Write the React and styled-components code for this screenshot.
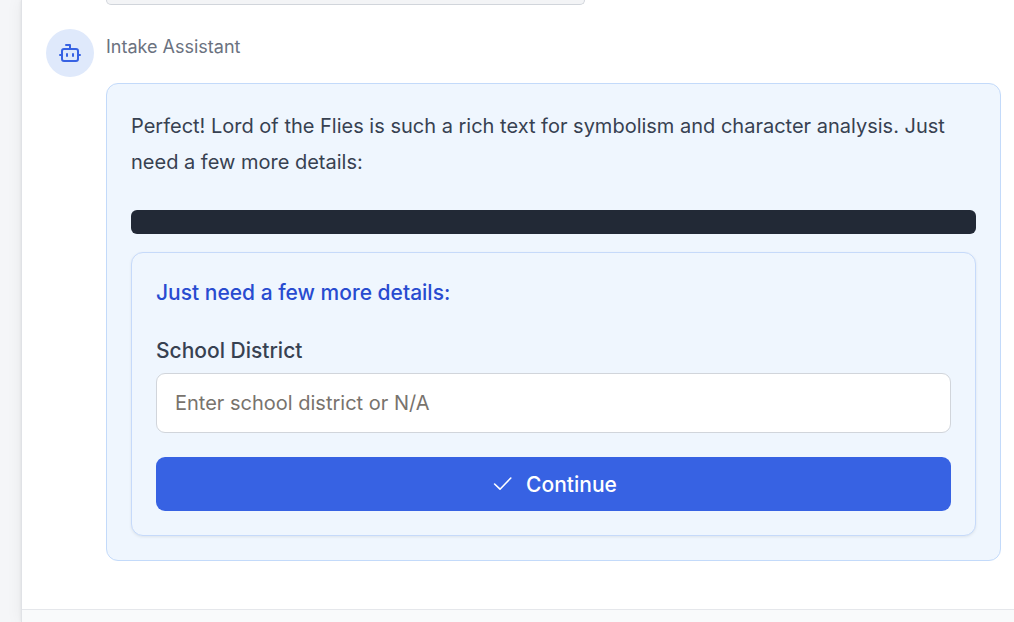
import React from "react";
import styled, { createGlobalStyle } from "styled-components";

const GlobalStyle = createGlobalStyle`
  *, *::before, *::after { box-sizing: border-box; }
  body {
    margin: 0;
    background: #f5f6f8;
    color: #374151;
    font-family: Inter, "Liberation Sans", sans-serif;
    -webkit-font-smoothing: antialiased;
  }
`;

const Page = styled.div`
  display: flex;
  min-height: 100vh;
  padding-left: 21px;
  overflow: hidden;
`;

const Panel = styled.main`
  flex: 1;
  min-width: 0;
  display: flex;
  flex-direction: column;
  background: #fff;
  border-left: 1px solid #e0e2e6;
  box-shadow: 0 0 3px rgba(0, 0, 0, 0.08), 0 0 16px rgba(0, 0, 0, 0.06);
`;

const Messages = styled.div`
  display: flex;
  flex-direction: column;
  gap: 24px;
  padding: 0 13px 48px 24px;
`;

const PreviousBubble = styled.div`
  width: 479px;
  max-width: 80%;
  height: 5px;
  margin-left: 60px;
  background: #f3f4f6;
  border: 1px solid #d1d5db;
  border-top: 0;
  border-radius: 0 0 12px 12px;
`;

const Message = styled.article`
  display: flex;
  align-items: flex-start;
  gap: 12px;
`;

const Avatar = styled.div`
  flex: none;
  display: grid;
  place-items: center;
  width: 48px;
  height: 48px;
  border-radius: 50%;
  background: #dfe9fb;
  color: #3762e3;
`;

const Content = styled.div`
  flex: 1;
  min-width: 0;
`;

const Sender = styled.div`
  margin-bottom: 18px;
  color: #6b7280;
  font-size: 18px;
  line-height: 36px;
`;

const Bubble = styled.div`
  padding: 24px;
  background: #eff6fe;
  border: 1px solid #c3dafa;
  border-radius: 12px;
`;

const Text = styled.p`
  margin: 0 0 30px;
  font-size: 20px;
  line-height: 36px;
`;

const CodeBar = styled.div`
  height: 24px;
  margin-bottom: 18px;
  background: #222936;
  border-radius: 6px;
`;

const Card = styled.form`
  display: flex;
  flex-direction: column;
  padding: 24px;
  border: 1px solid #c6dafa;
  border-radius: 12px;
  background: #eff6fe;
  box-shadow: 0 1px 3px rgba(0, 0, 0, 0.08);
`;

const Title = styled.h2`
  margin: 0 0 26px;
  color: #284bd0;
  font-size: 21px;
  font-weight: 500;
  line-height: 32px;
`;

const Label = styled.label`
  margin-bottom: 6px;
  font-size: 21px;
  font-weight: 500;
  line-height: 32px;
`;

const Input = styled.input`
  width: 100%;
  height: 60px;
  margin: 0 0 24px;
  padding: 0 18px;
  border: 1px solid #d1d5db;
  border-radius: 9px;
  background: #fff;
  color: #374151;
  font: inherit;
  font-size: 20px;
  &::placeholder { color: #78736d; opacity: 1; }
`;

const Button = styled.button`
  display: flex;
  align-items: center;
  justify-content: center;
  gap: 12px;
  height: 54px;
  padding: 0 24px;
  border: 0;
  border-radius: 9px;
  background: #3762e3;
  color: #fff;
  font: inherit;
  font-size: 21px;
  font-weight: 500;
  cursor: pointer;
`;

const Footer = styled.footer`
  flex: 1;
  min-height: 13px;
  border-top: 1px solid #e5e7eb;
  background: #f9fafb;
`;

const Icon = ({ strokeWidth = 2, children }) => (
  <svg
    width="24"
    height="24"
    viewBox="0 0 24 24"
    fill="none"
    stroke="currentColor"
    strokeWidth={strokeWidth}
    strokeLinecap="round"
    strokeLinejoin="round"
    aria-hidden="true"
  >
    {children}
  </svg>
);

const BotIcon = () => (
  <Icon>
    <path d="M12 8V4H8" />
    <rect width="16" height="12" x="4" y="8" rx="2" />
    <path d="M2 14h2" />
    <path d="M20 14h2" />
    <path d="M15 13v2" />
    <path d="M9 13v2" />
  </Icon>
);

const CheckIcon = () => (
  <Icon strokeWidth={1.6}>
    <path d="M20.8 6 10 17.2 4.6 12" />
  </Icon>
);

export default function App() {
  return (
    <>
      <GlobalStyle />
      <Page>
        <Panel>
          <Messages>
            <PreviousBubble />
            <Message>
              <Avatar>
                <BotIcon />
              </Avatar>
              <Content>
                <Sender>Intake Assistant</Sender>
                <Bubble>
                  <Text>
                    Perfect! Lord of the Flies is such a rich text for symbolism and character
                    analysis. Just need a few more details:
                  </Text>
                  <CodeBar />
                  <Card onSubmit={(event) => event.preventDefault()}>
                    <Title>Just need a few more details:</Title>
                    <Label htmlFor="district">School District</Label>
                    <Input id="district" type="text" placeholder="Enter school district or N/A" />
                    <Button type="submit">
                      <CheckIcon />
                      Continue
                    </Button>
                  </Card>
                </Bubble>
              </Content>
            </Message>
          </Messages>
          <Footer />
        </Panel>
      </Page>
    </>
  );
}
